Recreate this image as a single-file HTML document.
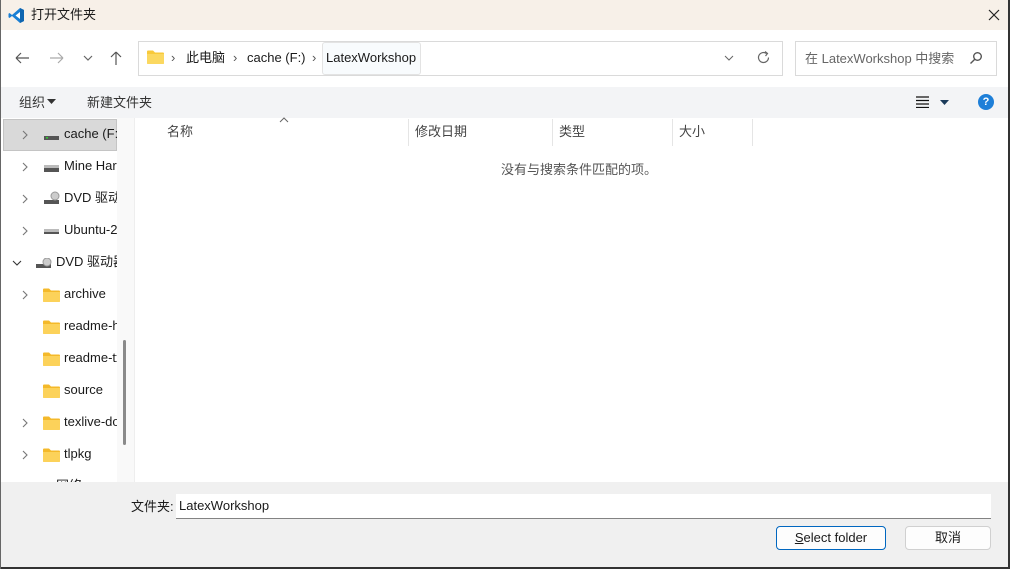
<!DOCTYPE html>
<html><head><meta charset="utf-8"><style>
*{margin:0;padding:0;box-sizing:border-box}
body{width:1010px;height:569px;overflow:hidden;background:#fff;font-family:"Liberation Sans","Noto Sans CJK SC",sans-serif;font-size:13px;color:#1a1a1a;position:relative}
.a{position:absolute;white-space:nowrap}
.t{line-height:18px}
</style></head><body>
<div class="a" style="left:0;top:0;width:1010px;height:30px;background:#f7f0e8"></div>
<svg class="a" style="left:8px;top:7px" width="17" height="17" viewBox="0 0 17 17"><path d="M12 1 L16 3 V14 L12 16 L4 9 L1.5 11 L0.5 10.3 V6.7 L1.5 6 L4 8 Z" fill="#1a7fd4"/><path d="M12 5 V12 L7.5 8.5 Z" fill="#fff"/><path d="M12 1 L16 3 V14 L12 16 Z" fill="#0e65b0"/></svg>
<div class="a t" style="left:31px;top:6px;font-size:13px">打开文件夹</div>
<svg class="a" style="left:988px;top:9px" width="12" height="12"><path d="M1 1L11 11M11 1L1 11" stroke="#222" stroke-width="1.2"/></svg>
<svg class="a" style="left:14px;top:50px" width="120" height="16" fill="none" stroke-width="1.2">
<path d="M2 8H15M2 8L7 3M2 8L7 13" stroke="#555"/>
<path d="M36 8H49M49 8L44 3M49 8L44 13" stroke="#aaa"/>
<path d="M70 6L74 10L78 6" stroke="#666"/>
<path d="M102 2V15M102 2L97 7M102 2L107 7" stroke="#555"/>
</svg>
<div class="a" style="left:138px;top:41px;width:645px;height:35px;border:1px solid #dadada"></div>
<svg class="a" style="left:147px;top:50px" width="17" height="14"><path d="M0 1.5Q0 0.5 1 0.5H6L8 2.5H16Q17 2.5 17 3.5V13Q17 14 16 14H1Q0 14 0 13Z" fill="#f8c93a"/><path d="M0 4H17V13Q17 14 16 14H1Q0 14 0 13Z" fill="#fbd860"/></svg>
<div class="a t" style="left:171px;top:49px;color:#555">›</div>
<div class="a t" style="left:186px;top:49px">此电脑</div>
<div class="a t" style="left:233px;top:49px;color:#555">›</div>
<div class="a t" style="left:247px;top:49px">cache (F:)</div>
<div class="a t" style="left:312px;top:49px;color:#555">›</div>
<div class="a" style="left:322px;top:42px;width:99px;height:33px;background:#f8fbfd;border:1px solid #e3e3e3;border-radius:3px"></div>
<div class="a t" style="left:326px;top:49px">LatexWorkshop</div>
<svg class="a" style="left:724px;top:54px" width="10" height="8"><path d="M1 2L5 6L9 2" stroke="#666" fill="none"/></svg>
<svg class="a" style="left:756px;top:50px" width="15" height="15" fill="none" stroke="#666" stroke-width="1.2"><path d="M12.5 7.5A5 5 0 1 1 10.5 3.5"/><path d="M9 1.5L11.5 3.5L9.5 6"/></svg>
<div class="a" style="left:795px;top:41px;width:202px;height:35px;border:1px solid #dadada"></div>
<div class="a t" style="left:805px;top:50px;color:#666">在 LatexWorkshop 中搜索</div>
<svg class="a" style="left:969px;top:51px" width="14" height="14" fill="none" stroke="#555" stroke-width="1.4"><circle cx="8.5" cy="5.5" r="3.8"/><path d="M5.8 8.2L1.5 12.5"/></svg>
<div class="a" style="left:0;top:87px;width:1008px;height:31px;background:#f3f4f6"></div>
<div class="a t" style="left:19px;top:94px;color:#333">组织</div>
<svg class="a" style="left:47px;top:99px" width="9" height="6"><path d="M0 0H9L4.5 5Z" fill="#333"/></svg>
<div class="a t" style="left:87px;top:94px;color:#333">新建文件夹</div>
<svg class="a" style="left:916px;top:96px" width="14" height="12"><path d="M0 1H13M0 4.5H13M0 8H13M0 11.5H13" stroke="#111" stroke-width="1.2"/></svg>
<svg class="a" style="left:940px;top:100px" width="9" height="6"><path d="M0 0H9L4.5 5Z" fill="#1a3a5a"/></svg>
<div class="a" style="left:978px;top:94px;width:16px;height:16px;border-radius:50%;background:#1e7fd8;color:#fff;font-size:11px;font-weight:bold;text-align:center;line-height:16px">?</div>
<div class="a" style="left:117px;top:118px;width:17px;height:364px;background:#f9f9f9"></div>
<div class="a" style="left:123px;top:340px;width:3px;height:105px;background:#8a8a8a;border-radius:2px"></div>
<div class="a" style="left:3px;top:119px;width:114px;height:32px;background:#d9d9d9;border:1px solid #c4c4c4"></div>
<div class="a" style="left:0;top:118px;width:117px;height:364px;overflow:hidden">
<svg class="a" style="left:0;top:0" width="117" height="370" fill="none" stroke="#777" stroke-width="1.1">
<path d="M23 13L27 17L23 21M23 45L27 49L23 53M23 77L27 81L23 85M23 109L27 113L23 117"/>
<path d="M13 143L17 147L21 143" stroke="#333"/>
<path d="M23 173L27 177L23 181M23 301L27 305L23 309M23 333L27 337L23 341"/>
</svg>
<svg class="a" style="left:44px;top:12px" width="16" height="104">
<rect x="0" y="6" width="15" height="4" fill="#555"/><rect x="2" y="7" width="2" height="1.5" fill="#3c3"/>
<rect x="0" y="38" width="15" height="4" fill="#555"/><rect x="0" y="35" width="15" height="3" fill="#bbb"/>
<rect x="0" y="70" width="15" height="4" fill="#555"/><circle cx="11" cy="66" r="4" fill="#ccc" stroke="#999"/>
<rect x="0" y="99" width="15" height="3" fill="#bbb"/><rect x="0" y="102" width="15" height="3" fill="#555"/><rect x="0" y="105" width="15" height="2" fill="#3a3"/>
</svg>
<svg class="a" style="left:36px;top:140px" width="16" height="12"><rect x="0" y="6" width="15" height="4" fill="#555"/><circle cx="11" cy="4" r="4" fill="#ccc" stroke="#999"/></svg>
<div class="a t" style="left:64px;top:7px">cache (F:)</div>
<div class="a t" style="left:64px;top:39px">Mine Hard</div>
<div class="a t" style="left:64px;top:71px">DVD 驱动器</div>
<div class="a t" style="left:64px;top:103px">Ubuntu-22</div>
<div class="a t" style="left:56px;top:135px">DVD 驱动器</div>
<div class="a t" style="left:64px;top:167px">archive</div>
<div class="a t" style="left:64px;top:199px">readme-ht</div>
<div class="a t" style="left:64px;top:231px">readme-tx</div>
<div class="a t" style="left:64px;top:263px">source</div>
<div class="a t" style="left:64px;top:295px">texlive-doc</div>
<div class="a t" style="left:64px;top:327px">tlpkg</div>
<div class="a t" style="left:56px;top:359px">网络</div>
<svg class="a" style="left:43px;top:170px" width="17" height="174">
<g id="f"><path d="M0 1.5Q0 0.5 1 0.5H6L8 2.5H16Q17 2.5 17 3.5V13Q17 14 16 14H1Q0 14 0 13Z" fill="#f4b92a"/><path d="M0 4H17V13Q17 14 16 14H1Q0 14 0 13Z" fill="#fcd25a"/></g>
<use href="#f" y="32"/><use href="#f" y="64"/><use href="#f" y="96"/><use href="#f" y="128"/><use href="#f" y="160"/>
</svg>
</div>
<div class="a" style="left:134px;top:118px;width:1px;height:364px;background:#eee"></div>
<div class="a t" style="left:167px;top:123px;color:#444">名称</div>
<svg class="a" style="left:279px;top:117px" width="10" height="6"><path d="M1 5L5 1L9 5" stroke="#666" fill="none"/></svg>
<div class="a t" style="left:415px;top:123px;color:#444">修改日期</div>
<div class="a t" style="left:559px;top:123px;color:#444">类型</div>
<div class="a t" style="left:679px;top:123px;color:#444">大小</div>
<div class="a" style="left:408px;top:119px;width:1px;height:27px;background:#e5e5e5"></div>
<div class="a" style="left:552px;top:119px;width:1px;height:27px;background:#e5e5e5"></div>
<div class="a" style="left:672px;top:119px;width:1px;height:27px;background:#e5e5e5"></div>
<div class="a" style="left:752px;top:119px;width:1px;height:27px;background:#e5e5e5"></div>
<div class="a t" style="left:501px;top:161px;color:#555">没有与搜索条件匹配的项。</div>
<div class="a" style="left:0;top:482px;width:1010px;height:87px;background:#f0f0f0"></div>
<div class="a t" style="left:131px;top:498px">文件夹:</div>
<div class="a" style="left:176px;top:494px;width:815px;height:25px;background:#fff;border-bottom:1px solid #838383"></div>
<div class="a t" style="left:179px;top:497px">LatexWorkshop</div>
<div class="a" style="left:776px;top:526px;width:110px;height:24px;background:#fdfdfd;border:1px solid #0067c0;border-radius:4px;text-align:center;line-height:22px"><u>S</u>elect folder</div>
<div class="a" style="left:905px;top:526px;width:86px;height:24px;background:#fdfdfd;border:1px solid #d0d0d0;border-radius:4px;text-align:center;line-height:22px">取消</div>
<div class="a" style="left:1008px;top:0;width:2px;height:569px;background:#333"></div>
<div class="a" style="left:0;top:567px;width:1010px;height:2px;background:#333"></div>
<div class="a" style="left:0;top:0;width:1px;height:569px;background:#666"></div>
</body></html>
